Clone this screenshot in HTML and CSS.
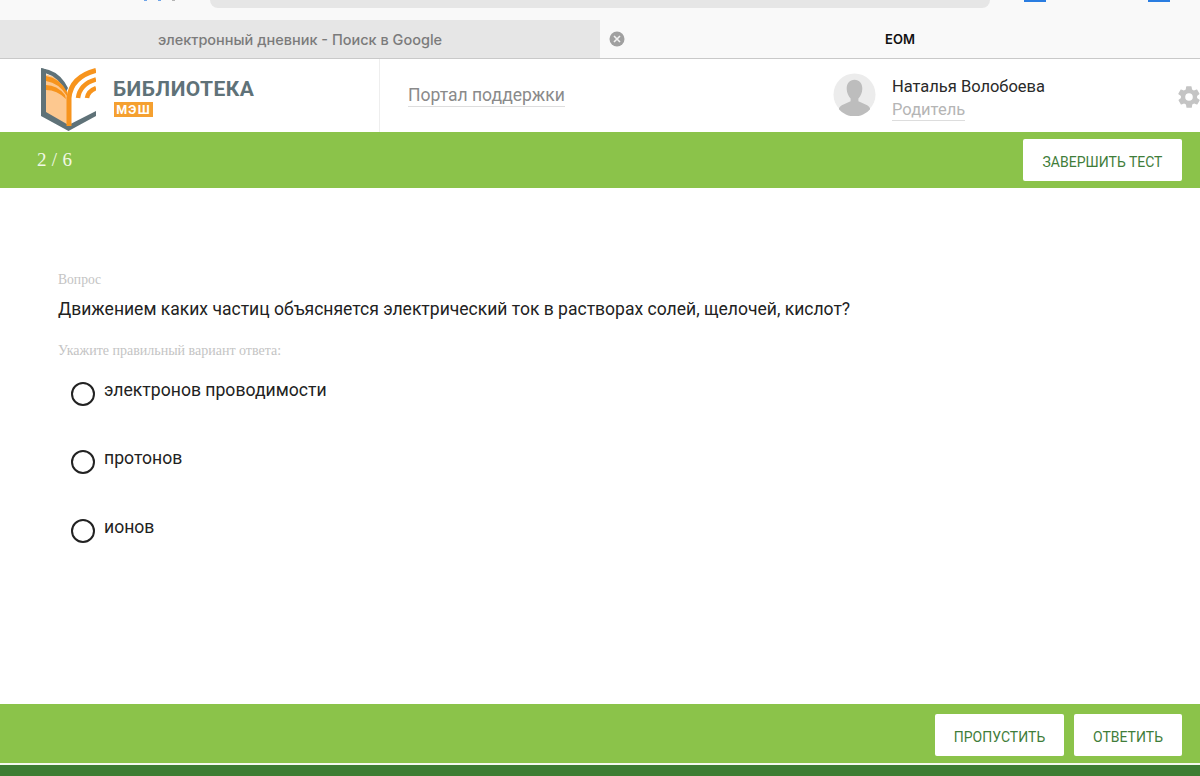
FILE: index.html
```html
<!DOCTYPE html>
<html lang="ru">
<head>
<meta charset="utf-8">
<title>ЕОМ</title>
<link rel="stylesheet" href="styles.css">
</head>
<body>
<div class="browser">
  <div class="addr-row">
    <div class="glyph-stub"><i></i><i></i><i class="grey"></i></div>
    <div class="addr"></div>
    <div class="toolbar-icons"><span class="blue"></span><span class="blue"></span></div>
  </div>
  <div class="tabs">
    <div class="tab inactive">электронный дневник - Поиск в Google</div>
    <div class="tab active">
      <svg class="tab-close" viewBox="0 0 16 16"><circle cx="8" cy="8" r="7.5" fill="#a0a0a0"/><path d="M5 5l6 6M11 5l-6 6" stroke="#f2f2f2" stroke-width="1.6"/></svg>
      <span class="tab-title">ЕОМ</span>
    </div>
  </div>
</div>
<header class="site-header">
  <div class="brand">
    <svg class="logo" viewBox="0 0 55 63">
      <path d="M4 6 L14 9 Q24 14 27 26 L27 57 L4 45Z" fill="#fdc88f"/>
      <path d="M0 0 L5 1.5 L5 44 L27.500 57 L55 43 L55 48 L27.500 63 L0 48Z" fill="#5f7278"/>
      <path d="M0 0 L8 2 Q20 6 27 20 L25 24 Q18 9 4 5Z" fill="#5f7278"/>
      <path d="M5 8 Q19 10 26 24 L26 28 Q18 15 5 13Z" fill="#f7941d"/>
      <path d="M5 17 Q16 17 24 27 L25 31 Q16 22 5 22Z" fill="#f7941d"/>
      <path d="M28 58 L28 30 Q30 9 55 2.500" fill="none" stroke="#f7941d" stroke-width="5"/>
      <path d="M37 30 Q39 16 55 11.500" fill="none" stroke="#f7941d" stroke-width="4.500"/>
      <path d="M46 30 Q47 23 55 20" fill="none" stroke="#f7941d" stroke-width="4.500"/>
    </svg>
    <div class="brand-text">
      <div class="brand-name">БИБЛИОТЕКА</div>
      <div class="brand-tag">МЭШ</div>
    </div>
  </div>
  <div class="support"><a class="support-link">Портал поддержки</a></div>
  <div class="user">
    <svg class="avatar" viewBox="0 0 44 44"><circle cx="22" cy="22" r="21.500" fill="#ececec"/><path d="M22 7c5 0 8 4 8 9 0 4-2 8-4 10v3l9 4c2 1 3 3 3 4a21 21 0 0 1-32 0c0-1 1-3 3-4l9-4v-3c-2-2-4-6-4-10 0-5 3-9 8-9z" fill="#bdbdbd"/></svg>
    <div class="user-info">
      <div class="user-name">Наталья Волобоева</div>
      <div><span class="user-role">Родитель</span></div>
    </div>
  </div>
  <svg class="gear" viewBox="0 0 24 24"><path fill="#c4c4c4" d="M19.400 13c.1-.3.1-.7.1-1s0-.7-.1-1l2.100-1.600c.2-.2.2-.4.1-.6l-2-3.500c-.1-.2-.4-.3-.6-.2l-2.500 1c-.5-.4-1.100-.7-1.700-1l-.4-2.600c0-.3-.2-.5-.5-.5h-4c-.3 0-.5.2-.5.4l-.4 2.700c-.6.2-1.100.6-1.700 1l-2.500-1c-.2-.1-.5 0-.6.2l-2 3.500c-.1.2-.1.5.1.6L4.600 11c0 .3-.1.7-.1 1s0 .7.1 1l-2.100 1.600c-.2.2-.2.4-.1.6l2 3.500c.1.2.4.3.6.2l2.500-1c.5.4 1.100.7 1.700 1l.4 2.600c0 .3.2.5.5.5h4c.3 0 .5-.2.5-.4l.4-2.700c.6-.2 1.100-.6 1.700-1l2.500 1c.2.1.5 0 .6-.2l2-3.500c.1-.2.1-.5-.1-.6L19.400 13zM12 15.500a3.500 3.500 0 1 1 0-7 3.500 3.500 0 0 1 0 7z"/></svg>
</header>
<div class="bar top-bar">
  <div class="counter">2 / 6</div>
  <button class="btn">ЗАВЕРШИТЬ ТЕСТ</button>
</div>
<main class="content">
  <div class="label">Вопрос</div>
  <div class="question">Движением каких частиц объясняется электрический ток в растворах солей, щелочей, кислот?</div>
  <div class="label hint">Укажите правильный вариант ответа:</div>
  <div class="options">
    <div class="option"><span class="radio"></span><span>электронов проводимости</span></div>
    <div class="option"><span class="radio"></span><span>протонов</span></div>
    <div class="option"><span class="radio"></span><span>ионов</span></div>
  </div>
</main>
<div class="bar bottom-bar">
  <button class="btn skip">ПРОПУСТИТЬ</button>
  <button class="btn answer">ОТВЕТИТЬ</button>
</div>
<div class="footer-strip"></div>
</body>
</html>
```
FILE: styles.css
```css
* { box-sizing: border-box; }
html, body { margin: 0; padding: 0; }
body {
  width: 1200px; height: 776px; overflow: hidden;
  background: #fff; color: #222;
  font-family: Roboto, "Liberation Sans", sans-serif;
  display: flex; flex-direction: column;
}
.browser { height: 59px; background: #f9f9f9; border-bottom: 1px solid #c9c9c9; flex: none; }
.addr-row { height: 20px; display: flex; }
.glyph-stub { width: 210px; display: flex; justify-content: flex-end; gap: 11px; padding-right: 35px; }
.glyph-stub i { width: 3px; height: 1px; background: #6fa4e8; display: block; }
.glyph-stub .grey { background: #b5b5b5; }
.addr { width: 780px; height: 8px; background: #e6e6e6; border-radius: 0 0 12px 12px; }
.toolbar-icons { flex: 1; display: flex; gap: 102px; padding-left: 34px; }
.blue { width: 22px; height: 2px; background: #2a7de1; display: block; }
.tabs { height: 38px; display: flex; }
.tab { font-family: Inter, Roboto, sans-serif; font-weight: 500; display: flex; align-items: center; }
.inactive { width: 600px; background: #e6e6e6; color: #7b7b7b; justify-content: center; font-size: 14.500px; }
.active { flex: 1; position: relative; justify-content: center; color: #111; font-weight: 600; font-size: 13px; }
.tab-close { position: absolute; left: 9px; top: 11px; width: 16px; height: 16px; }
.site-header { height: 73px; flex: none; display: flex; align-items: stretch; position: relative; }
.brand { width: 380px; border-right: 1px solid #eee; display: flex; padding: 9px 0 0 41px; gap: 17px; }
.logo { width: 55px; height: 63px; flex: none; }
.brand-text { padding-top: 9px; }
.brand-name { font-size: 21px; font-weight: 700; color: #5f7278; line-height: 25px; letter-spacing: .45px; }
.brand-tag { background: #f5a030; color: #fff; font-size: 12.500px; font-weight: 700; line-height: 15px; height: 15px; width: 39px; margin: 0 0 0 1px; text-align: center; letter-spacing: 1.2px; }
.support { width: 453px; padding: 26px 0 0 28px; }
.support-link { font-size: 17.550px; color: #8a8a8a; border-bottom: 1px solid #ddd; line-height: 21px; display: inline-block; }
.user { display: flex; gap: 16px; padding-top: 15px; margin-top: -1px; }
.avatar { width: 43px; height: 43px; flex: none; }
.user-name { font-size: 16.500px; line-height: 26px; color: #2a2a2a; padding-top: 1px; letter-spacing: -.02px; height: 27px; }
.user-role { font-size: 16.500px; color: #b5b5b5; border-bottom: 1px solid #ddd; line-height: 20px; display: inline-block; }
.gear { position: absolute; left: 1176px; top: 25px; width: 26px; height: 26px; }
.bar { background: #8bc34a; flex: none; display: flex; align-items: flex-start; }
.top-bar { height: 56px; justify-content: space-between; padding: 7px 18px 0 37px; }
.counter { font-family: "Liberation Serif", serif; color: #f1f8e5; font-size: 19px; line-height: 42px; letter-spacing: .3px; }
.btn { height: 42px; background: #fff; border: 0; border-radius: 2px; color: #3f7d3a; font-family: Roboto, sans-serif; font-size: 14px; padding: 4px 0 0; }
.top-bar .btn { width: 159px; }
.content { flex: 1; padding: 84px 0 0 58px; }
.label { font-family: "Liberation Serif", serif; color: #c4c4c4; font-size: 13.600px; line-height: 15px; }
.question { font-size: 17.550px; line-height: 24px; margin-top: 10px; color: #222; }
.hint { margin-top: 22px; font-size: 14px; }
.options { margin-top: 20px; padding-left: 13px; }
.option { display: flex; gap: 9px; height: 68.400px; font-size: 17.600px; line-height: 24px; color: #222; }
.radio { width: 24px; height: 24px; border: 2.500px solid #222; border-radius: 50%; margin-top: 4px; flex: none; }
.bottom-bar { height: 59px; justify-content: flex-end; padding: 10px 18px 0 0; gap: 10px; }
.skip { width: 129px; }
.answer { width: 108px; }
.footer-strip { height: 13px; flex: none; background: #3d7d33; border-top: 2px solid #f4f8ee; }
```
